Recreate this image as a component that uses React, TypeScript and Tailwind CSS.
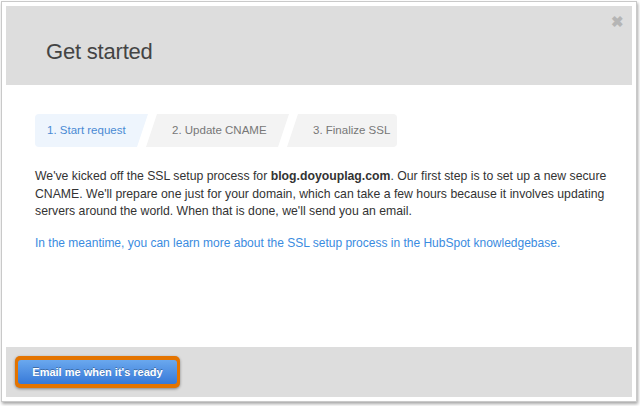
import React from "react";

const steps = [
  { label: "1. Start request", active: true },
  { label: "2. Update CNAME", active: false },
  { label: "3. Finalize SSL", active: false },
];

const App = () => {
  return (
    <div className="w-[640px] h-[406px] bg-white pt-[1px] pl-[1px] font-['Liberation_Sans',Arial,sans-serif]">
      <div className="w-[636px] h-[401px] border border-[#c9c9c9] bg-white p-[4px] shadow-[1px_2px_3px_rgba(0,0,0,0.35)] flex flex-col">
        {/* header */}
        <div className="relative h-[79px] bg-[#dddddd] flex items-center pl-[40px]">
          <h1 className="text-[22px] text-[#444444] tracking-[-0.2px] mt-[12px]">Get started</h1>
          <span className="absolute right-[8px] top-[8px] text-[15px] font-bold text-[#b5b5b5] leading-none">
            ✖
          </span>
        </div>

        {/* body */}
        <div className="flex-1 pl-[29px] pr-[20px] pt-[29px]">
          <div className="flex h-[33px] text-[11.5px] whitespace-nowrap">
            <div className="w-[113px] bg-[#eef5fd] text-[#4a8ad4] rounded-l-[4px] flex items-center pl-[12px] [clip-path:polygon(0_0,100%_0,calc(100%-11px)_100%,0_100%)]">
              {steps[0].label}
            </div>
            <div className="w-[143px] -ml-[2px] bg-[#f3f3f3] text-[#777777] flex items-center pl-[26px] [clip-path:polygon(11px_0,100%_0,calc(100%-11px)_100%,0_100%)]">
              {steps[1].label}
            </div>
            <div className="w-[110px] -ml-[2px] bg-[#f3f3f3] text-[#777777] rounded-r-[4px] flex items-center pl-[26px] [clip-path:polygon(11px_0,100%_0,100%_100%,0_100%)]">
              {steps[2].label}
            </div>
          </div>

          <p className="mt-[21px] text-[12.25px] leading-[17.5px] text-[#333333] whitespace-nowrap">
            We've kicked off the SSL setup process for <b>blog.doyouplag.com</b>. Our first step is to set up a new secure
            <br />
            CNAME. We'll prepare one just for your domain, which can take a few hours because it involves updating
            <br />
            servers around the world. When that is done, we'll send you an email.
          </p>
          <p className="mt-[14px] text-[12px] leading-[17.5px] text-[#3a8be0] whitespace-nowrap">
            In the meantime, you can learn more about the SSL setup process in the HubSpot knowledgebase.
          </p>
        </div>

        {/* footer */}
        <div className="h-[50px] bg-[#dddddd] flex items-center pl-[9px]">
          <button className="h-[32px] px-[3px] rounded-[5px] bg-[#e47400] shadow-[0_1px_3px_rgba(0,0,0,0.4)] flex items-center">
            <span className="h-[24px] w-[159px] rounded-[3px] bg-gradient-to-b from-[#6aa8ee] to-[#3779d8] text-white text-[11px] font-bold flex items-center justify-center [text-shadow:0_-1px_0_rgba(0,0,0,0.3)]">
              Email me when it's ready
            </span>
          </button>
        </div>
      </div>
    </div>
  );
};

export default App;
